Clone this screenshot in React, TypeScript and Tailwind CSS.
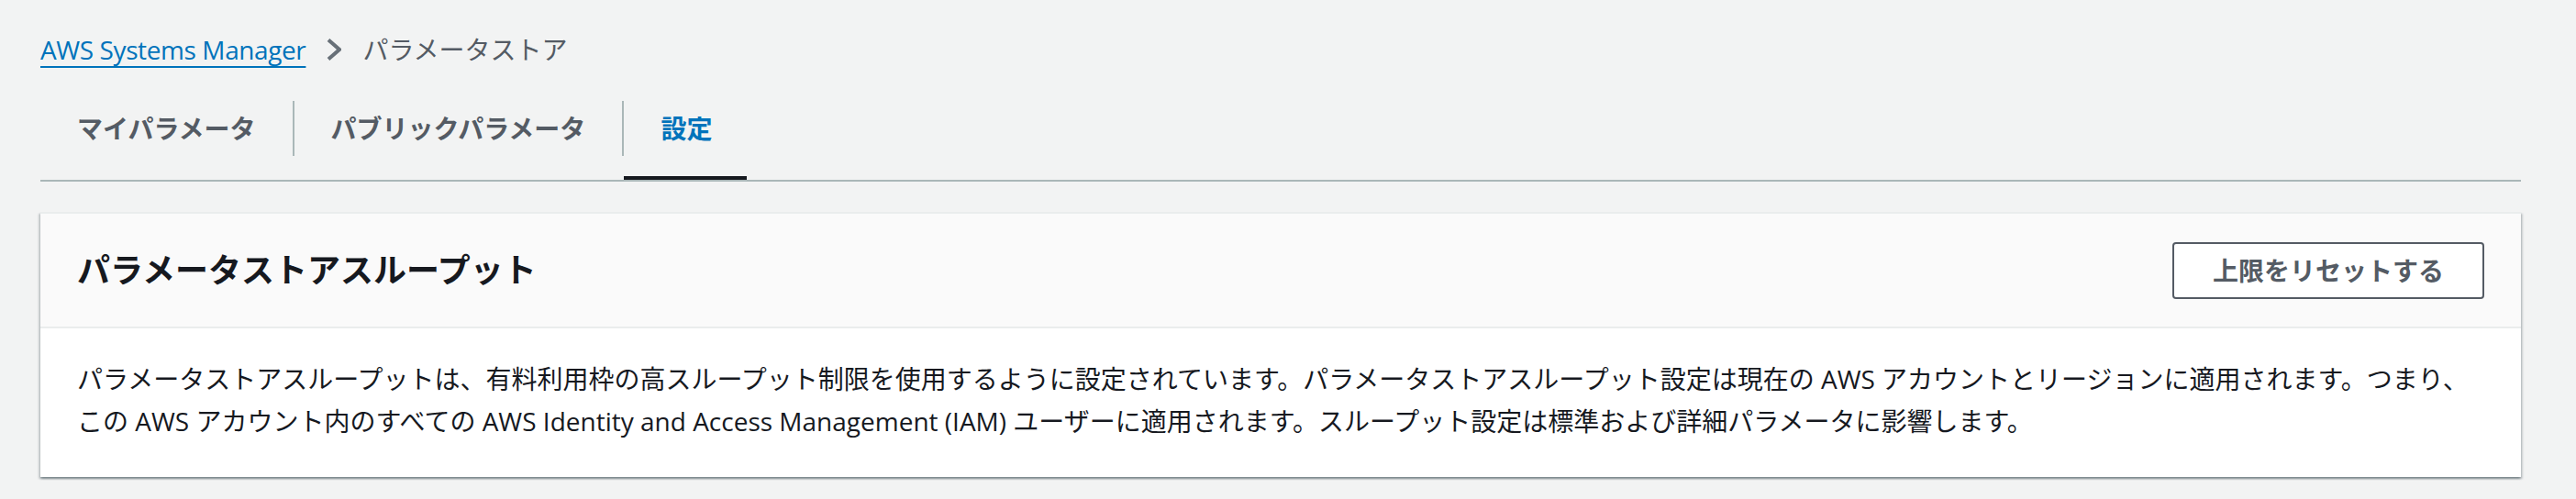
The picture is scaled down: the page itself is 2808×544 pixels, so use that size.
import { useState } from "react";

const tabs = ["マイパラメータ", "パブリックパラメータ", "設定"];

export default function App() {
  const [active, setActive] = useState(2);

  return (
    <div
      className="min-h-[544px] w-full bg-[#f2f3f3] pl-[44px] pr-[60px] pt-[34px] text-[28px] text-[#16191f]"
      style={{ fontFamily: '"Open Sans", "Noto Sans CJK JP", sans-serif' }}
    >
      {/* breadcrumb */}
      <nav className="flex h-[40px] items-center leading-[40px]">
        <a
          href="#"
          className="tracking-[-0.4px] text-[#0073bb] underline decoration-2 underline-offset-[7px]"
        >
          AWS Systems Manager
        </a>
        <svg
          width="16"
          height="24"
          viewBox="0 0 16 24"
          className="mx-[23px] shrink-0"
        >
          <polyline
            points="2,1.5 14,12 2,22.5"
            fill="none"
            stroke="#687078"
            strokeWidth="4"
          />
        </svg>
        <span className="text-[#545b64]">パラメータストア</span>
      </nav>

      {/* tabs */}
      <div className="mt-[10px] flex border-b-2 border-[#aab7b8]">
        {tabs.map((label, i) => (
          <div key={label} className="flex items-center">
            {i > 0 && <div className="h-[60px] w-[2px] bg-[#aab7b8]" />}
            <button
              onClick={() => setActive(i)}
              className={
                "relative flex h-[112px] items-center px-[40px] font-bold " +
                (active === i ? "text-[#0073bb]" : "text-[#545b64]")
              }
            >
              {label}
              {active === i && (
                <span className="absolute bottom-0 left-0 right-[2px] h-[4px] bg-[#16191f]" />
              )}
            </button>
          </div>
        ))}
      </div>

      {/* container */}
      <section className="mt-[33px] border-t-2 border-[#eaeded] bg-white shadow-[0_2px_2px_0_rgba(0,28,36,0.3),2px_2px_2px_0_rgba(0,28,36,0.15),-2px_2px_2px_0_rgba(0,28,36,0.15)]">
        <header className="flex h-[125px] items-center justify-between border-b-2 border-[#eaeded] bg-[#fafafa] px-[40px]">
          <h2 className="text-[36px] font-bold leading-[44px]">
            パラメータストアスループット
          </h2>
          <button className="h-[62px] rounded-[4px] border-2 border-[#545b64] bg-white px-[42px] font-bold text-[#545b64]">
            上限をリセットする
          </button>
        </header>
        <div className="px-[40px] pb-[38px] pt-[32px] leading-[46px]">
          <p className="whitespace-nowrap">
            パラメータストアスループットは、有料利用枠の高スループット制限を使用するように設定されています。パラメータストアスループット設定は現在の
            AWS アカウントとリージョンに適用されます。つまり、
            <br />
            この AWS アカウント内のすべての AWS Identity and Access Management
            (IAM)
            ユーザーに適用されます。スループット設定は標準および詳細パラメータに影響します。
          </p>
        </div>
      </section>
    </div>
  );
}
